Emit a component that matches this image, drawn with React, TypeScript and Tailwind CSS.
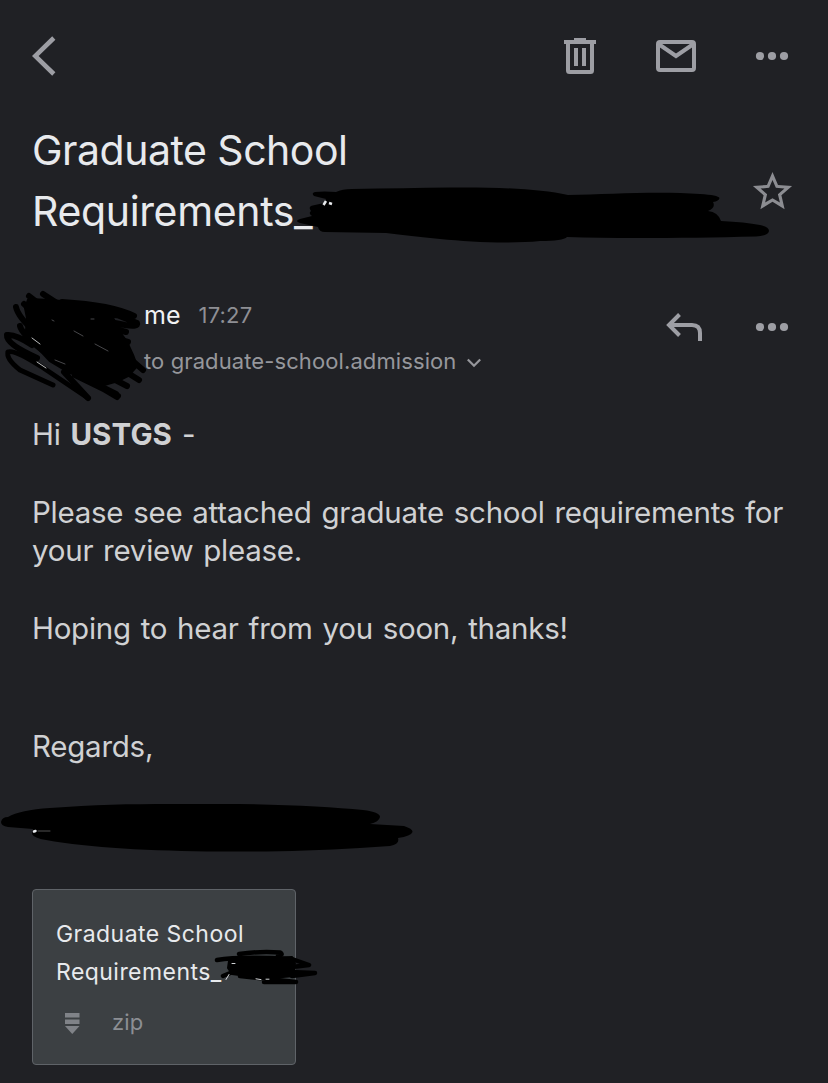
import React from "react";

interface ScribbleProps {
  className: string;
  viewBox: string;
  children: React.ReactNode;
}

// Marker strokes that hide private details
const Scribble: React.FC<ScribbleProps> = ({ className, viewBox, children }) => (
  <svg
    viewBox={viewBox}
    className={`absolute pointer-events-none ${className}`}
    fill="none"
    stroke="#000"
    strokeLinecap="round"
    strokeLinejoin="round"
    aria-hidden="true"
  >
    {children}
  </svg>
);

const DotsIcon = () => (
  <svg viewBox="0 0 40 40" className="size-10" fill="currentColor">
    <circle cx="8" cy="20" r="4.1" />
    <circle cx="20" cy="20" r="4.1" />
    <circle cx="32" cy="20" r="4.1" />
  </svg>
);

const Toolbar = () => (
  <header className="flex h-28 items-center justify-between pl-8 pr-9 text-[#9d9ea4]">
    <button aria-label="Back">
      <svg viewBox="0 0 24 40" className="h-10 w-6" fill="none" stroke="currentColor" strokeWidth="4.6">
        <path d="M21.8 2L3.2 20l18.6 18" />
      </svg>
    </button>
    <div className="flex items-center gap-14">
      <button aria-label="Delete">
        <svg viewBox="0 0 40 40" className="size-10" fill="currentColor">
          <path d="M14 2h12v2h10v4H4V4h10z" />
          <path d="M6 8h28v26.500a3.500 3.500 0 0 1-3.500 3.500h-21A3.500 3.500 0 0 1 6 34.500zM10 8v26h20V8z" fillRule="evenodd" />
          <path d="M14 12h4v18h-4zM22 12h4v18h-4z" />
        </svg>
      </button>
      <button aria-label="Mark as unread">
        <svg viewBox="0 0 40 40" className="size-10" fill="none" stroke="currentColor" strokeWidth="4">
          <rect x="2" y="6" width="36" height="28" rx="2" />
          <path d="M2.500 8L20 20l17.500-12" />
        </svg>
      </button>
      <button aria-label="More options">
        <DotsIcon />
      </button>
    </div>
  </header>
);

const Subject = () => (
  <div className="relative flex items-start justify-between pl-8 pr-8 pt-2">
    <h1 className="text-[41px] leading-[61px] tracking-[-0.5px] text-[#e8eaed]">
      Graduate School
      <br />
      <span className="tracking-[-0.35px]">Requirements_</span>
    </h1>
    <button aria-label="Star" className="mt-12 text-[#8c8d92]">
      <svg viewBox="0 0 24 24" className="size-[47px]" fill="currentColor">
        <path d="M22 9.240l-7.190-.620L12 2 9.190 8.630 2 9.240l5.460 4.730L5.820 21 12 17.270 18.180 21l-1.630-7.030L22 9.240zM12 15.400l-3.760 2.270 1-4.280-3.320-2.880 4.380-.380L12 6.100l1.710 4.040 4.380.380-3.320 2.880 1 4.280L12 15.400z" />
      </svg>
    </button>
    <Scribble className="left-[290px] top-[68px] h-[70px] w-[490px]" viewBox="290 180 490 70">
      <path
        fill="#000"
        stroke="none"
        d="M315 192Q324 191 336 192Q342 189 352 189Q405 188 450 187.500C500 187 540 189 568 195C610 194 660 191 700 194Q718 195 719.500 198Q719 201 713 202Q716 208 708 211Q718 212 721 221Q745 222 760 225Q769 227 769 231Q768 236 756 236.500C690 238 620 239 567 237Q563 241 540 241C510 244 470 242 440 239Q410 236 386 233L325 232Q319 232 318 227L300 223Q294 221 300 219L312 216Q308 213 311 211Q307 206 315 205L324 203L326 199L314 196Q311 193 315 192Z"
      />
      <path d="M323.500 205l2.500-4M329 203l3 1" stroke="#e8eaed" strokeWidth="2.500" strokeLinecap="butt" />
    </Scribble>
  </div>
);

const Sender = () => (
  <div className="relative flex h-[172px] items-start justify-between pl-36 pr-9">
    <div className="pt-14">
      <div className="flex h-[34px] items-baseline gap-[18px]">
        <span className="text-[25px] leading-[34px] text-[#f1f2f4]">me</span>
        <span className="relative -top-px text-[22px] tracking-[0.2px] text-[#8e8f94]">17:27</span>
      </div>
      <div className="mt-3 flex h-[34px] items-center gap-[10px] text-[#96979c]">
        <span className="text-[22px] leading-[34px] tracking-[0.1px]">to graduate-school.admission</span>
        <svg viewBox="0 0 16 12" className="mt-1 h-3 w-4" fill="none" stroke="currentColor" strokeWidth="2.200">
          <path d="M1.800 2.500L8 8.700l6.200-6.200" />
        </svg>
      </div>
    </div>
    <div className="flex gap-12 pt-[65px] text-[#9d9ea4]">
      <button aria-label="Reply">
        <svg viewBox="0 0 40 40" className="size-10" fill="none" stroke="currentColor" strokeWidth="4">
          <path d="M15.500 7.500L5 18l10.500 10.500M5 18h23Q36 18 36 26v8" />
        </svg>
      </button>
      <button aria-label="More message options">
        <DotsIcon />
      </button>
    </div>
    <Scribble className="left-0 top-[43px] h-[120px] w-[150px]" viewBox="0 285 150 120">
      <path
        fill="#000"
        strokeWidth="4"
        d="M29 300L50 301L72 303L98 309L112 318L120 334L126 342L132 355L136 366L128 375L118 380L104 384L90 378L70 372L50 360L36 345L27 331L28 318L26 308Z"
      />
      <g strokeWidth="6">
        <path d="M29 296l22 17M43 294l20 13M24 304l20 20M16 307q2 10 20 26" />
        <path d="M62 302q50 3 72 14q-20 1-40-6M92 305l45 18q2 4-12 2l-30-6M104 326l22 6M110 337l18 5" />
        <path d="M7 335q-1 9 30 23M7 335q9-1 25 10M20 326q2 8 22 24" />
        <path d="M8 352Q6 359 20 370L53 385M8 352q6-3 34 15l46 31" strokeWidth="5" />
        <path d="M64 372l24 26M75 375l43 21M96 384l20 10M100 372l27 14M115 365l24 15M120 350l23 20M90 381l27 16" />
      </g>
      <path d="M32 338l8 6M37 362l9 6" stroke="#d0d1d3" strokeWidth="0.900" />
      <path d="M52 320l2 1M74 331l9 5M95 344l13 7M55 360l10 4M91 319h3" stroke="#8e8f94" strokeWidth="0.500" />
    </Scribble>
  </div>
);

const Message = () => (
  <div className="relative h-[475px] pl-8">
    <div className="pt-px text-[29.500px] leading-[39px] tracking-[-0.25px] [word-spacing:1.8px] text-[#d0d1d3]">
      <p>
        Hi <strong className="font-bold tracking-[0.1px]">USTGS</strong> -
      </p>
      <p className="mt-[39px] whitespace-nowrap leading-[38px]">
        Please see attached graduate school requirements for
        <br />
        your review please.
      </p>
      <p className="mt-10">Hoping to hear from you soon, thanks!</p>
      <p className="mt-[79px]">Regards,</p>
    </div>
    <Scribble className="left-0 top-[381px] h-[65px] w-[420px]" viewBox="0 795 420 65">
      <path
        fill="#000"
        stroke="none"
        d="M8 817Q20 810 50 808C110 803 160 804 220 804C280 804 330 807 363 810Q380 812 380 817Q379 822 370 824L404 826Q413 829 412.500 832Q411 836 398 838Q400 844 390 846L360 848C310 851 260 852 220 851.500C150 851 90 848 46 840Q34 838 32 834L33 829L8 827Q1 826 1 822Q2 817 8 817Z"
      />
      <path d="M34 831.500l1.500-.500" stroke="#e8eaed" strokeWidth="2.500" />
      <path d="M38 831h12" stroke="#666" strokeWidth="0.800" />
    </Scribble>
  </div>
);

const Attachment = () => (
  <div className="relative ml-8 h-44 w-[264px] rounded-[4px] border border-[#5f6368] bg-[#3c4043] pl-[23px] pt-[25px]">
    <p className="text-[23px] leading-[38px] tracking-[0.45px] text-[#e8eaed]">
      Graduate School
      <br />
      Requirements_
    </p>
    <div className="mt-[13px] flex h-[38px] items-center pl-[9px] text-[#808388]">
      <svg viewBox="0 0 15 22" className="mt-0.5 h-[22px] w-[15px]" fill="currentColor">
        <path d="M0 0h14.500v4.500H0zM0 6.500h14.500v4.500H0zM0 13h14.500l-7.250 8z" />
      </svg>
      <span className="-mt-0.5 pl-8 text-[22px] leading-[38px] tracking-[0.1px] text-[#8c8f94]">zip</span>
    </div>
    <Scribble className="left-[177px] top-[55px] h-[45px] w-[115px]" viewBox="210 945 115 45">
      <path fill="#000" strokeWidth="2" d="M229 961L292 957L295 963L294 976L272 978L254 977L232 974L228 968Z" />
      <g strokeWidth="4.500">
        <path d="M239 954Q260 951 280 952.500Q284 955 278 955.500" />
        <path d="M217 960Q240 956 292 959L309 965L292 967" />
        <path d="M223 976L240 969M290 972L315 973L292 976M240 976L296 982H264" />
      </g>
      <path d="M229 974.500l-3 5M232 963.500h3M256 978.800l5 .800M266 979.200h3" stroke="#e8eaed" strokeWidth="0.900" />
    </Scribble>
  </div>
);

const App: React.FC = () => {
  return (
    <main className="h-[1083px] w-full overflow-hidden bg-[#202125] font-['Inter',sans-serif]">
      <Toolbar />
      <Subject />
      <Sender />
      <Message />
      <Attachment />
    </main>
  );
};

export default App;
